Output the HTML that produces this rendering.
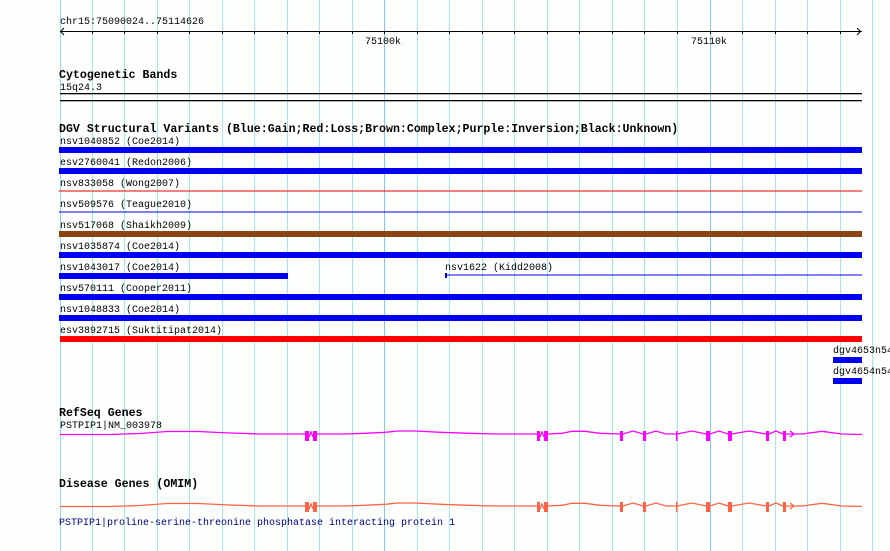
<!DOCTYPE html>
<html><head><meta charset="utf-8"><style>
html,body{margin:0;padding:0;background:#fdfffd;}
svg{display:block}
text{font-family:"Liberation Mono",monospace;font-size:10px;fill:#000}
.b{font-weight:bold;font-size:11.6px}
</style></head><body>
<svg width="890" height="551" viewBox="0 0 890 551" xmlns="http://www.w3.org/2000/svg">
<rect width="890" height="551" fill="#fdfffd"/>
<g id="grid" stroke="#a8e6ee" stroke-width="1">
<line x1="60.5" y1="0" x2="60.5" y2="551" stroke="#9ad4ee"/>
<line x1="92.5" y1="0" x2="92.5" y2="551"/>
<line x1="124.5" y1="0" x2="124.5" y2="551"/>
<line x1="157.5" y1="0" x2="157.5" y2="551"/>
<line x1="189.5" y1="0" x2="189.5" y2="551"/>
<line x1="222.5" y1="0" x2="222.5" y2="551"/>
<line x1="254.5" y1="0" x2="254.5" y2="551"/>
<line x1="287.5" y1="0" x2="287.5" y2="551"/>
<line x1="319.5" y1="0" x2="319.5" y2="551"/>
<line x1="352.5" y1="0" x2="352.5" y2="551"/>
<line x1="384.5" y1="0" x2="384.5" y2="551" stroke="#88c8ee"/>
<line x1="417.5" y1="0" x2="417.5" y2="551"/>
<line x1="449.5" y1="0" x2="449.5" y2="551"/>
<line x1="482.5" y1="0" x2="482.5" y2="551"/>
<line x1="514.5" y1="0" x2="514.5" y2="551"/>
<line x1="547.5" y1="0" x2="547.5" y2="551"/>
<line x1="579.5" y1="0" x2="579.5" y2="551"/>
<line x1="612.5" y1="0" x2="612.5" y2="551"/>
<line x1="644.5" y1="0" x2="644.5" y2="551"/>
<line x1="677.5" y1="0" x2="677.5" y2="551"/>
<line x1="710.5" y1="0" x2="710.5" y2="551" stroke="#88c8ee"/>
<line x1="742.5" y1="0" x2="742.5" y2="551"/>
<line x1="775.5" y1="0" x2="775.5" y2="551"/>
<line x1="807.5" y1="0" x2="807.5" y2="551"/>
<line x1="840.5" y1="0" x2="840.5" y2="551"/>
<line x1="872.5" y1="0" x2="872.5" y2="551"/>
</g>
<!-- ruler -->
<text x="60" y="24">chr15:75090024..75114626</text>
<g stroke="#000" stroke-width="1" fill="none">
<line x1="60" y1="31.5" x2="862" y2="31.5"/>
<polyline points="64,28 60.5,31.5 64,35"/>
<polyline points="857,28 860.5,31.5 857,35"/>
<path d="M92.5 31v3M124.5 31v3M157.5 31v3M189.5 31v3M222.5 31v3M254.5 31v3M287.5 31v3M319.5 31v3M352.5 31v3M384.5 31v3M417.5 31v3M449.5 31v3M482.5 31v3M514.5 31v3M547.5 31v3M579.5 31v3M612.5 31v3M644.5 31v3M677.5 31v3M710.5 31v3M742.5 31v3M775.5 31v3M807.5 31v3M840.5 31v3"/>
</g>
<text x="365" y="44">75100k</text>
<text x="691" y="44">75110k</text>
<!-- cytogenetic -->
<text class="b" x="59" y="78">Cytogenetic Bands</text>
<text x="60" y="90">15q24.3</text>
<rect x="60" y="93" width="802" height="1.3" fill="#000"/>
<rect x="60" y="100" width="802" height="1.3" fill="#000"/>
<!-- DGV -->
<text class="b" x="59" y="132">DGV Structural Variants (Blue:Gain;Red:Loss;Brown:Complex;Purple:Inversion;Black:Unknown)</text>
<text x="60" y="144">nsv1040852 (Coe2014)</text>
<rect x="59" y="147" width="803" height="6" fill="#0000ee"/>
<text x="60" y="165">esv2760041 (Redon2006)</text>
<rect x="59" y="168" width="803" height="6" fill="#0000ee"/>
<text x="60" y="186">nsv833058 (Wong2007)</text>
<rect x="59" y="190.5" width="803" height="1" fill="#ee0000"/>
<text x="60" y="207">nsv509576 (Teague2010)</text>
<rect x="59" y="211.5" width="803" height="1" fill="#0000ee"/>
<text x="60" y="228">nsv517068 (Shaikh2009)</text>
<rect x="59" y="231" width="803" height="6" fill="#8b4513"/>
<text x="60" y="249">nsv1035874 (Coe2014)</text>
<rect x="59" y="252" width="803" height="6" fill="#0000ee"/>
<text x="60" y="270">nsv1043017 (Coe2014)</text>
<rect x="59" y="273" width="229" height="6" fill="#0000ee"/>
<text x="445" y="270">nsv1622 (Kidd2008)</text>
<rect x="445" y="274.5" width="417" height="1" fill="#0000ee"/>
<rect x="445" y="273" width="2" height="5" fill="#0000ee"/>
<text x="60" y="291">nsv570111 (Cooper2011)</text>
<rect x="59" y="294" width="803" height="6" fill="#0000ee"/>
<text x="60" y="312">nsv1048833 (Coe2014)</text>
<rect x="59" y="315" width="803" height="6" fill="#0000ee"/>
<text x="60" y="333">esv3892715 (Suktitipat2014)</text>
<rect x="60" y="336" width="802" height="6" fill="#ff0000"/>
<text x="833" y="353">dgv4653n54</text>
<rect x="833" y="357" width="29" height="6" fill="#0000ee"/>
<text x="833" y="374">dgv4654n54</text>
<rect x="833" y="378" width="29" height="6" fill="#0000ee"/>
<!-- RefSeq -->
<text class="b" x="59" y="416">RefSeq Genes</text>
<text x="60" y="428">PSTPIP1|NM_003978</text>
<g id="gene" fill="none" stroke="#ff00ff" stroke-width="1.3">
<polyline points="60,434.5 110,434.5 140,433.5 167,431.5 198,431.5 230,433 260,434 305,434"/>
<polyline points="309,437 311,432 313,437"/>
<polyline points="317,434 345,434 365,433.3 385,432.3 398,431 415,431 441,432.3 469,433.3 496,434 537,434"/>
<polyline points="540,437 542,432 544,437"/>
<polyline points="547,434 562,433.3 572,431.3 585,431.3 600,433.3 620,434"/>
<polyline points="623,434 633,431 643,434"/>
<polyline points="646,434 656,431 666,434 676,434"/>
<polyline points="677,434 692,431 706,434"/>
<polyline points="710,434 719,431 728,434"/>
<polyline points="732,434 749,431 766,434"/>
<polyline points="769,434 776,431 783,434"/>
<polyline points="786,434 802,434 822,431.3 842,434 862,434.5"/>
<polyline points="790,431 794,434 790,437"/>
</g>
<g fill="#ff00ff">
<rect x="305" y="431" width="4" height="10"/><rect x="313" y="431" width="4" height="10"/>
<rect x="537" y="431" width="3" height="10"/><rect x="544" y="431" width="4" height="10"/>
<rect x="620" y="431" width="3" height="10"/><rect x="643" y="431" width="3" height="10"/>
<rect x="676" y="431" width="1.5" height="10"/><rect x="706" y="431" width="4" height="10"/>
<rect x="728" y="431" width="4" height="10"/><rect x="766" y="431" width="3" height="10"/>
<rect x="783" y="431" width="3" height="10"/>
</g>
<!-- OMIM -->
<text class="b" x="59" y="487">Disease Genes (OMIM)</text>
<g transform="translate(0,72)">
<g fill="none" stroke="#ff6347" stroke-width="1.3">
<polyline points="60,434.5 110,434.5 140,433.5 167,431.5 198,431.5 230,433 260,434 305,434"/>
<polyline points="309,437 311,432 313,437"/>
<polyline points="317,434 345,434 365,433.3 385,432.3 398,431 415,431 441,432.3 469,433.3 496,434 537,434"/>
<polyline points="540,437 542,432 544,437"/>
<polyline points="547,434 562,433.3 572,431.3 585,431.3 600,433.3 620,434"/>
<polyline points="623,434 633,431 643,434"/>
<polyline points="646,434 656,431 666,434 676,434"/>
<polyline points="677,434 692,431 706,434"/>
<polyline points="710,434 719,431 728,434"/>
<polyline points="732,434 749,431 766,434"/>
<polyline points="769,434 776,431 783,434"/>
<polyline points="786,434 802,434 822,431.3 842,434 862,434.5"/>
<polyline points="790,431 794,434 790,437"/>
</g>
<g fill="#ff6347">
<rect x="305" y="430" width="4" height="10"/><rect x="313" y="430" width="4" height="10"/>
<rect x="537" y="430" width="3" height="10"/><rect x="544" y="430" width="4" height="10"/>
<rect x="620" y="430" width="3" height="10"/><rect x="643" y="430" width="3" height="10"/>
<rect x="676" y="430" width="1.5" height="10"/><rect x="706" y="430" width="4" height="10"/>
<rect x="728" y="430" width="4" height="10"/><rect x="766" y="430" width="3" height="10"/>
<rect x="783" y="430" width="3" height="10"/>
</g>
</g>
<text x="59" y="525" style="fill:#000080">PSTPIP1|proline-serine-threonine phosphatase interacting protein 1</text>
</svg>
</body></html>
